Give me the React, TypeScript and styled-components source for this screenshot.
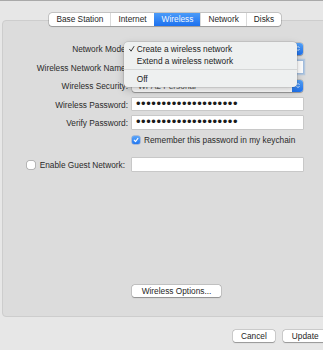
import React from "react";
import styled, { createGlobalStyle } from "styled-components";

const Global = createGlobalStyle`
  html, body { margin: 0; padding: 0; overflow: hidden; background: #e7e7e7; }
  body { font-family: "Liberation Sans", Arial, sans-serif; }
`;

const Viewport = styled.div`
  width: 323px;
  height: 350px;
  overflow: hidden;
`;

const Window = styled.div`
  width: 330px;
  height: 350px;
  box-sizing: border-box;
  background: #e7e7e7;
  border-top: 1px solid #a9a9a9;
  padding: 19px 2px 0 2px;
  display: flex;
  flex-direction: column;
  font-family: "Liberation Sans", Arial, sans-serif;
  font-size: 8.3px;
  color: #2a2a2a;
`;

const Panel = styled.div`
  height: 297px;
  flex: none;
  box-sizing: border-box;
  border: 1px solid #cdcdcd;
  border-radius: 4px;
  background: #dcdcdc;
  display: flex;
  flex-direction: column;
  padding-bottom: 19px;
`;

const TabBar = styled.div`
  align-self: center;
  display: flex;
  margin-top: -8px;
  height: 13px;
  background: #fff;
  border-radius: 3px;
  box-shadow: 0 0 0 0.5px rgba(0, 0, 0, 0.28), 0 0.5px 1px rgba(0, 0, 0, 0.18);
  overflow: hidden;
`;

const Tab = styled.div<{ $active?: boolean }>`
  display: flex;
  align-items: center;
  padding: 0 7px;
  line-height: 13px;
  white-space: nowrap;
  border-left: 1px solid ${(p) => (p.$active ? "transparent" : "#dadada")};
  &:first-child { border-left: none; padding-left: 7.5px; }
  color: ${(p) => (p.$active ? "#f4f8ff" : "#262626")};
  background: ${(p) => (p.$active ? "linear-gradient(#4b9bf8, #1d71ef)" : "transparent")};
`;

const Form = styled.div`
  margin-top: 16px;
  display: grid;
  grid-template-columns: 125px 171px;
  column-gap: 4px;
  row-gap: 5.5px;
  grid-auto-rows: 13px;
`;

const Label = styled.div`
  text-align: right;
  white-space: nowrap;
  line-height: 13px;
  padding-top: 1px;
`;

const SelectWrap = styled.div`
  position: relative;
  display: flex;
  align-items: center;
`;

const Select = styled.div`
  flex: 1;
  height: 12px;
  display: flex;
  align-items: center;
  background: #fff;
  border-radius: 3px;
  box-shadow: 0 0 0 0.5px rgba(0, 0, 0, 0.2), 0 0.5px 1px rgba(0, 0, 0, 0.25);
  overflow: hidden;
`;

const SelectText = styled.span`
  flex: 1;
  padding-left: 6px;
  white-space: nowrap;
  color: #5a5a5a;
`;

const ArrowBox = styled.div`
  width: 11px;
  height: 100%;
  display: flex;
  align-items: center;
  justify-content: center;
  background: linear-gradient(#55a3f9, #1f72ef);
`;

const Menu = styled.div`
  position: absolute;
  left: -8px;
  top: -0.5px;
  width: 173px;
  padding: 2px 0;
  background: #eef0f0;
  border-radius: 4px;
  box-shadow: 0 0 0 0.5px rgba(0, 0, 0, 0.16), 0 3px 9px rgba(0, 0, 0, 0.22);
  z-index: 2;
  color: #222;
`;

const MenuItem = styled.div`
  height: 11.4px;
  display: flex;
  align-items: center;
  white-space: nowrap;
`;

const CheckGutter = styled.span`
  width: 12.7px;
  flex: none;
  display: flex;
  align-items: center;
  padding-left: 5px;
  box-sizing: border-box;
`;

const MenuSeparator = styled.div`
  height: 1px;
  margin: 3px 0;
  background: #d5d7d7;
`;

const Field = styled.div<{ $focused?: boolean }>`
  align-self: center;
  height: 12.5px;
  box-sizing: border-box;
  display: flex;
  align-items: center;
  background: #fff;
  box-shadow: ${(p) =>
    p.$focused
      ? "0 0 0 1px #a3bedf, 0 0 0 2.2px rgba(150, 185, 225, 0.55)"
      : "0 0 0 0.5px rgba(0, 0, 0, 0.18)"};
  white-space: nowrap;
`;

const Dots = styled.span`
  padding-left: 4px;
  font-size: 13px;
  letter-spacing: 0.55px;
  line-height: 12.5px;
  color: #1a1a1a;
`;

const CheckRow = styled.div`
  grid-column: 2;
  display: flex;
  align-items: center;
  gap: 4px;
  height: 9px;
  margin-top: 1px;
  white-space: nowrap;
`;

const Box = styled.span<{ $checked?: boolean }>`
  width: 8px;
  height: 8px;
  flex: none;
  box-sizing: border-box;
  border-radius: 2px;
  display: inline-flex;
  align-items: center;
  justify-content: center;
  background: ${(p) => (p.$checked ? "linear-gradient(#5aa5f9, #2277f0)" : "#fff")};
  box-shadow: ${(p) =>
    p.$checked ? "0 0 0 0.5px rgba(20, 90, 200, 0.5)" : "0 0 0 0.5px rgba(0, 0, 0, 0.35)"};
`;

const GuestLabel = styled.div`
  display: flex;
  justify-content: flex-end;
  align-items: center;
  gap: 5px;
  padding-right: 3px;
  padding-top: 1px;
  margin-top: 10px;
  white-space: nowrap;
`;

const GuestField = styled(Field)`
  margin-top: 10px;
  height: 13px;
`;

const OptionsRow = styled.div`
  margin-top: auto;
  padding-left: 129px;
  display: flex;
`;

const Button = styled.div`
  height: 12px;
  padding: 0 9.7px;
  display: flex;
  align-items: center;
  justify-content: center;
  white-space: nowrap;
  background: #fff;
  border-radius: 2.5px;
  box-shadow: 0 0 0 0.5px rgba(0, 0, 0, 0.2), 0 0.5px 1px rgba(0, 0, 0, 0.28);
  color: #262626;
`;

const FooterButton = styled(Button)`
  padding: 0 8.4px;
  height: 11.5px;
`;

const Footer = styled.div`
  flex: 1;
  display: flex;
  justify-content: flex-end;
  align-items: flex-start;
  gap: 8.3px;
  padding: 13px 1px 0 0;
`;

const MenuCheck = () => (
  <svg width="5.5" height="6" viewBox="0 0 10 11" fill="none">
    <path d="M1 6 L3.8 9.5 L9 1" stroke="#222" strokeWidth="1.6" strokeLinecap="round" strokeLinejoin="round" />
  </svg>
);

const BoxCheck = () => (
  <svg width="6" height="6" viewBox="0 0 10 10" fill="none">
    <path d="M2 5.3 L4.2 7.6 L8.2 2.4" stroke="#fff" strokeWidth="1.8" strokeLinecap="round" strokeLinejoin="round" />
  </svg>
);

const Chevrons = () => (
  <svg width="6" height="9" viewBox="0 0 10 14" fill="none">
    <path d="M3 5.5 L5 3.5 L7 5.5 M3 8.5 L5 10.5 L7 8.5" stroke="#fff" strokeWidth="1.4" strokeLinecap="round" strokeLinejoin="round" />
  </svg>
);

const tabs = ["Base Station", "Internet", "Wireless", "Network", "Disks"];
const dots = "\u2022".repeat(20);

export default function App() {
  return (
    <Viewport>
      <Global />
      <Window>
        <Panel>
          <TabBar>
            {tabs.map((t) => (
              <Tab key={t} $active={t === "Wireless"}>
                {t}
              </Tab>
            ))}
          </TabBar>
          <Form>
            <Label>Network Mode:</Label>
            <SelectWrap>
              <Select>
                <SelectText>Create a wireless network</SelectText>
                <ArrowBox>
                  <Chevrons />
                </ArrowBox>
              </Select>
              <Menu>
                <MenuItem>
                  <CheckGutter>
                    <MenuCheck />
                  </CheckGutter>
                  Create a wireless network
                </MenuItem>
                <MenuItem>
                  <CheckGutter />
                  Extend a wireless network
                </MenuItem>
                <MenuSeparator />
                <MenuItem>
                  <CheckGutter />
                  Off
                </MenuItem>
              </Menu>
            </SelectWrap>

            <Label>Wireless Network Name:</Label>
            <Field $focused />

            <Label>Wireless Security:</Label>
            <SelectWrap>
              <Select>
                <SelectText>WPA2 Personal</SelectText>
                <ArrowBox>
                  <Chevrons />
                </ArrowBox>
              </Select>
            </SelectWrap>

            <Label>Wireless Password:</Label>
            <Field>
              <Dots>{dots}</Dots>
            </Field>

            <Label>Verify Password:</Label>
            <Field>
              <Dots>{dots}</Dots>
            </Field>

            <CheckRow>
              <Box $checked>
                <BoxCheck />
              </Box>
              Remember this password in my keychain
            </CheckRow>

            <GuestLabel>
              <Box />
              Enable Guest Network:
            </GuestLabel>
            <GuestField />
          </Form>
          <OptionsRow>
            <Button>Wireless Options...</Button>
          </OptionsRow>
        </Panel>
        <Footer>
          <FooterButton>Cancel</FooterButton>
          <FooterButton>Update</FooterButton>
        </Footer>
      </Window>
    </Viewport>
  );
}
